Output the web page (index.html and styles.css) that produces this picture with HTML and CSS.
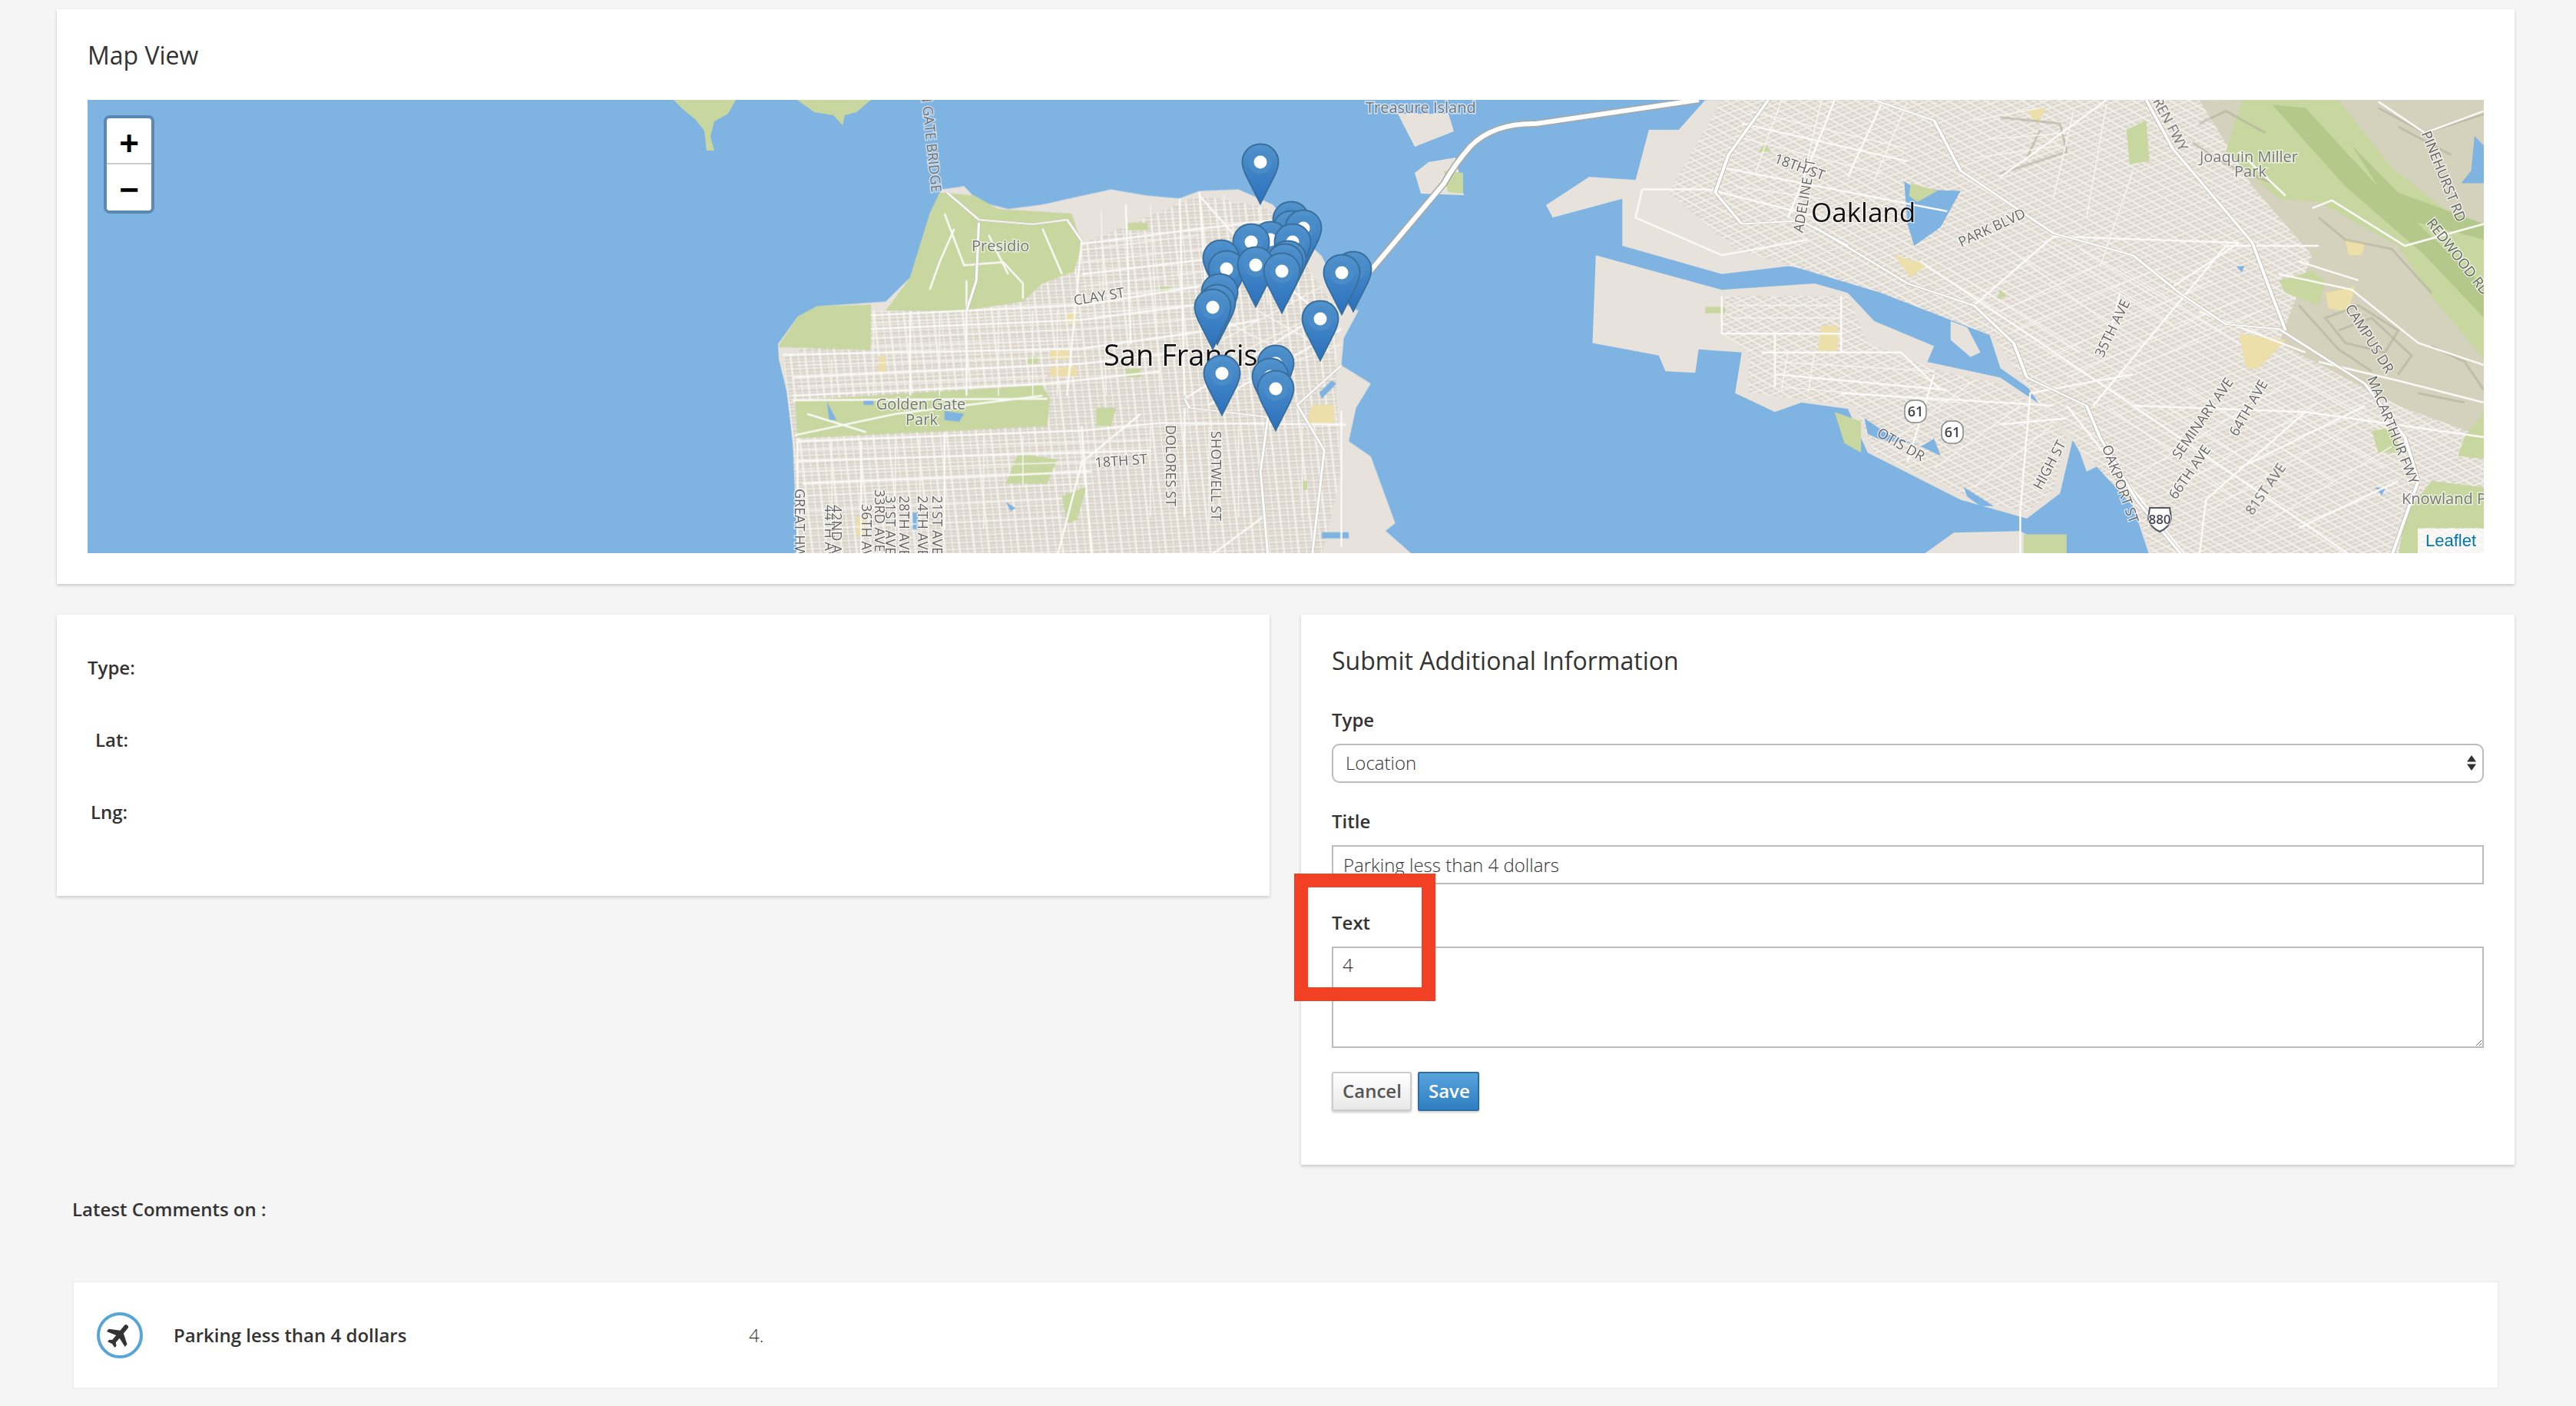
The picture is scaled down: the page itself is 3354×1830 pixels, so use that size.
FILE: index.html
```html
<!DOCTYPE html>
<html lang="en">
<head>
<meta charset="utf-8">
<title>Map View</title>
<link rel="stylesheet" href="styles.css">
</head>
<body>
<main class="page">
  <section class="card map-card">
    <h2 class="card-title">Map View</h2>
    <div class="map">
      <svg class="map-svg" viewBox="114 130 3120 590" width="3120" height="590" xmlns="http://www.w3.org/2000/svg">
        <defs>
          <pattern id="sfgrid" width="30" height="22" patternUnits="userSpaceOnUse" patternTransform="rotate(-4)">
            <rect width="30" height="22" class="p-block"/>
            <path d="M0 0H30M0 11H30M0 0V22M15 0V22" class="p-street"/>
          </pattern>
          <pattern id="oakgrid" width="22" height="22" patternUnits="userSpaceOnUse" patternTransform="rotate(-38)">
            <rect width="22" height="22" class="p-block2"/>
            <path d="M0 0H22M0 11H22M0 0V22M11 0V22" class="p-street2"/>
          </pattern>
          <linearGradient id="pinfill" x1="0" y1="0" x2="0" y2="1">
            <stop offset="0" stop-color="#5193cd"/>
            <stop offset="1" stop-color="#2a70bd"/>
          </linearGradient>
          <symbol id="pin" width="50" height="82" viewBox="0 0 50 82">
            <path d="M25 1.500C11.500 1.500 1.500 12 1.500 25c0 6 2.500 12 5 17.500L25 79l18.500-36.500c2.500-5.500 5-11.500 5-17.500C48.500 12 38.500 1.500 25 1.500z" class="pin-body"/>
            <circle cx="25" cy="25" r="15.500" class="pin-halo"/>
            <circle cx="25" cy="25" r="8.500" class="pin-dot"/>
          </symbol>
          <g id="sfhw">
            <path d="M1020 1530L1005 1250L1020 1070L860 1040L850 1010"/>
            <path d="M1110 1530L1135 1180L1080 1030L1170 900"/>
            <path d="M365 330L430 420L540 435L610 420L640 490"/>
            <path d="M430 430L425 620L405 720"/>
          </g>
          <g id="oakhw">
            <path d="M350 25L290 200L270 320L310 420L400 410L470 490"/>
            <path d="M420 430L560 610L660 680L720 800L740 910L830 1000L850 1100L905 1300L975 1480"/>
            <path d="M510 25L600 90L640 250L780 450L900 520L970 640L1040 740L1120 755L1250 930L1310 1100L1330 1240L1290 1480"/>
            <path d="M920 25L960 180L1080 480L1110 650L1130 760"/>
          </g>
        </defs>

        <g class="tiles">
          <path class="park" d="M877 130L958 130L948 148L930 158L925 178L930 196L920 196L917 170L905 155L890 143Z"/>
          <path class="park" d="M1038 130L1134 130L1115 146L1100 150L1097 163L1085 150L1060 146Z"/>

          <!-- San Francisco, coordinates from the crop -->
          <g transform="translate(1000 120) scale(.638 .395)">
            <path class="land" d="M70 1530L60 1300L40 1000L22 880L20 830L60 740L100 705L150 700L240 690L290 610L330 400L355 320L400 310L430 360L490 385L560 370L630 345L700 320L770 340L840 350L880 325L960 320L1030 370L1090 480L1130 540L1180 700L1205 720L1175 810L1170 900L1230 960L1200 1040L1185 1150L1230 1200L1280 1420L1260 1445L1320 1530Z"/>
            <path class="grid" d="M60 1530L50 1150L30 880L210 720L400 720L640 500L880 340L1020 380L1160 720L1160 1000L1170 1250L1130 1530Z"/>
            <path class="park" d="M350 330L420 340L470 385L620 400L640 500L625 590L560 630L520 690L400 720L240 720L290 610L330 400Z"/>
            <path class="park" d="M20 840L60 740L100 705L210 700L210 850Z"/>
            <path class="park" d="M55 1015L560 965L575 1010L570 1100L60 1140Z"/>
            <path class="park" d="M485 1290L510 1190L590 1210L570 1290Z"/>
            <path class="park" d="M670 1040L710 1040L700 1100L670 1100Z"/>
            <path class="park" d="M600 1330L650 1300L630 1410L610 1420Z"/>
            <path class="park" d="M800 640H820V660H800ZM735 430H775V455H735ZM730 910H760V940H730ZM530 870H550V895H530ZM1090 1280H1100V1310H1090Z"/>
            <path class="sand" d="M225 870H240V920H225ZM575 850H615V880H575ZM575 905H630V935H575ZM1110 1030L1155 1030L1155 1090L1100 1090ZM180 1400H200V1460H180ZM610 730H630V760H610Z"/>
            <path class="lake" d="M195 1015L215 1010L215 1030L195 1030ZM360 1050L400 1060L390 1085L360 1080ZM120 1020L140 1080L125 1080ZM295 1385H305V1440H295ZM485 1350L505 1370L495 1380Z"/>
            <path class="lake" d="M1125 990L1150 950L1160 960L1130 1010Z"/>
            <path class="lake" d="M1130 1450H1185V1470H1130Z"/>

            <g class="rd-thin">
              <path d="M60 900L640 870M60 970L570 935M210 760L640 725M210 810L640 780M210 840L640 815"/>
              <path d="M60 1180L780 1145M60 1250L700 1215M70 1330L660 1290M70 1380L600 1340M70 1440L600 1400"/>
              <path d="M640 520L880 470M640 560L1040 490M640 640L1050 560M640 680L1040 610M640 730L960 690M640 780L920 740"/>
              <path d="M130 880V1000M215 720V1000M350 720V1000M470 720V1000M540 720V1000M590 720V1000"/>
              <path d="M130 1150V1530M260 1130V1530M310 1130V1440M440 1130V1440M520 1130V1300M780 1100V1400M900 1100V1440M960 1100V1400M1090 1100V1400"/>
              <path d="M680 390L690 1000M780 370L800 1000M930 340L960 760M1000 380L1020 700M1050 430L1070 700"/>
              <path d="M900 840L1130 640M950 870L1160 700M970 950L1170 830M940 760L1080 880M1000 720L1150 860"/>
            </g>
            <g class="rd">
              <path d="M30 865L640 845L880 790L1000 750"/>
              <path d="M50 940L640 895L880 850"/>
              <path d="M50 1000L570 960L800 920"/>
              <path d="M60 1150L640 1115L800 1090L1180 1095"/>
              <path d="M60 1215L780 1180"/>
              <path d="M70 1290L660 1250"/>
              <path d="M210 735L650 700L880 640"/>
              <path d="M210 780L640 750L880 700"/>
              <path d="M640 500L880 450L1040 420"/>
              <path d="M640 600L1050 520"/>
              <path d="M290 720V1000"/>
              <path d="M405 620V1000"/>
              <path d="M60 1140V1530"/>
              <path d="M190 1150V1530"/>
              <path d="M360 1120V1440"/>
              <path d="M640 1100L660 1530"/>
              <path d="M730 370L740 830"/>
              <path d="M840 350L850 1000"/>
              <path d="M880 330L900 800"/>
              <path d="M640 490L610 1000"/>
              <path d="M850 1040V1400"/>
              <path d="M1170 1050V1500"/>
              <path d="M850 1010L1130 730"/>
              <path d="M900 1030L1170 780"/>
              <path d="M880 340L1000 560L1120 720"/>
              <path d="M760 1060L640 1220L590 1530"/>
              <path d="M1010 1400L900 1530"/>
              <path d="M50 1015L570 1010"/>
              <path d="M55 1130L260 1060L560 1000"/>
              <path d="M80 1060L200 1120"/>
              <path d="M360 400L400 570L480 560L520 630L520 680"/>
              <path d="M380 450L350 560L330 650M450 470L490 600M560 450L600 600"/>
            </g>
            <use href="#sfhw" class="case"/>
            <use href="#sfhw" class="core"/>
          </g>

          <!-- Treasure Island, Yerba Buena, Bay Bridge -->
          <path class="land" d="M1820 148L1886 148L1893 171L1842 191Z"/>
          <path class="land" d="M1842 225L1860 211L1895 205L1906 254L1850 252Z"/>
          <path class="park" d="M1880 222L1905 225L1905 252L1885 250Z"/>
          <path class="hw-bridge-c" d="M1784 353L1880 239Q1893 215 1915 190Q1945 160 2000 161L2212 130"/>
          <path class="hw-bridge" d="M1784 353L1880 239Q1893 215 1915 190Q1945 160 2000 161L2212 130"/>

          <!-- Oakland and Alameda, coordinates from the crop -->
          <g transform="translate(2000 120) scale(.8635 .408)">
            <path class="land" d="M255 25L215 120L170 120L150 280L80 270L15 360L25 400L130 340L130 490L280 580L380 555L460 580L540 640L620 690L680 750L700 880L780 1000L820 1150L830 1210L870 1170L900 1320L925 1480L1429 1480L1429 25Z"/>
            <path class="grid2" d="M280 25L200 320L300 500L520 640L690 780L760 1000L900 1320L930 1480L1429 1480L1429 900L1200 400L1040 25Z"/>
            <path class="hill" d="M1000 25H1429V1100L1300 1000L1120 800L1170 520L1080 300Z"/>
            <path class="park" d="M1065 25L1210 25L1290 240L1429 470L1429 850L1350 650L1300 490L1180 350L1120 340L1040 190Z"/>
            <path class="park-dark" d="M1110 40L1160 50L1260 280L1380 520L1429 620V720L1340 520L1220 300ZM1230 170L1300 320L1429 420V470L1300 400Z"/>
            <path class="park" d="M1120 600L1170 570L1190 600L1180 680L1130 640Z"/>
            <path class="park" d="M1300 1480L1310 1350L1350 1240L1429 1260L1429 1390L1330 1390L1330 1480Z"/>
            <path class="park" d="M1260 1080L1290 1070L1305 1150L1270 1150Z"/>
            <path class="park" d="M890 120L920 90L925 220L895 230Z"/>
            <path class="park" d="M1400 1100L1429 1020V1170L1390 1160Z"/>
            <path class="park" d="M700 630L710 650L695 660ZM345 165L355 190L335 190ZM560 310L600 320L580 350Z"/>
            <path class="sand" d="M1190 640L1235 620L1225 700L1195 690ZM1220 470L1250 480L1245 520L1225 520ZM1060 770L1130 790L1090 880L1070 880ZM740 60L770 50L755 100ZM540 520L590 550L565 590Z"/>
            <g class="contour">
              <path d="M1190 720L1240 680L1300 760L1280 830L1220 800Z"/>
              <path d="M1210 760L1260 720L1320 840L1300 900"/>
              <path d="M1150 680L1210 820L1260 890"/>
              <path d="M1180 400L1220 470L1290 500L1350 640"/>
              <path d="M1000 100L1040 60L1100 130M990 160L1040 230L1110 290"/>
              <path d="M700 80L790 100L800 190L700 260M760 120L740 210"/>
              <path d="M1350 810L1400 860L1429 950M1330 960L1400 990"/>
              <path d="M1270 50L1340 130L1429 70M1300 110L1380 200"/>
            </g>
            <path class="land" d="M90 520L280 630L420 610L470 640L510 730L600 810L590 860L700 910L770 1010L810 1100L790 1280L740 1360L640 1300L500 1150L470 1010L400 990L360 1020L300 960L310 830L245 820L240 895L195 890L185 840L85 800Z"/>
            <path class="grid2" d="M285 650L470 650L500 800L610 890L700 930L770 1020L800 1100L780 1270L740 1340L660 1300L510 1150L480 1000L320 960L320 830L280 770Z"/>
            <path class="sand" d="M430 745L455 745L455 825L425 825Z"/>
            <path class="park" d="M255 685H285V705H255ZM450 1020L490 1050L490 1150L465 1120Z"/>
            <path class="land" d="M625 730L650 750L670 830L655 845L625 790Z"/>
            <path class="land" d="M580 1480L630 1405L730 1400L800 1480Z"/>
            <path class="park" d="M735 1410H800V1480H735Z"/>
            <path class="lake" d="M555 285L575 310L640 315L610 430L570 490L560 420Z"/>
            <path class="park" d="M565 290L605 315L575 350L562 330Z"/>
            <path class="lake" d="M495 1040L530 1090L580 1130L600 1105L610 1160L570 1120L520 1110L500 1090Z"/>
            <path class="lake" d="M645 1260L690 1320L670 1320L650 1290Z"/>
            <path class="lake" d="M1415 140L1429 170V290L1395 290L1410 250Z"/>
            <path class="lake" d="M1056 555L1068 555L1064 575Z M1265 1260L1280 1265L1275 1285Z"/>
            <g class="rd-thin">
              <path d="M620 560L820 830M700 480L900 800M760 470L960 740M820 500L1010 760M880 560L1060 800"/>
              <path d="M700 700L860 540M720 760L940 560M770 850L1020 600M800 910L1060 660M880 900L1100 690"/>
              <path d="M860 1000L1060 1300M920 960L1140 1270M980 940L1200 1240M1060 930L1280 1200M1140 900L1330 1130"/>
              <path d="M900 1230L1130 930M950 1280L1180 990M1010 1340L1240 1050M1080 1400L1290 1130"/>
              <path d="M660 1260L780 1060M600 1200L730 1000M540 1110L660 920M380 830L370 950M420 830L410 960"/>
              <path d="M300 680H460M300 720H460M360 860L600 890M370 940L640 990"/>
              <path d="M320 60L560 180M300 140L520 260M370 25L330 260M430 25L400 300M560 30L510 280M300 300L430 340"/>
              <path d="M660 90L760 50M680 150L800 130M660 210L790 170"/>
              <path d="M810 60L780 340M860 40L830 400M900 250L850 560"/>
            </g>
            <g class="rd">
              <path d="M580 540L900 1000L1160 1020L1429 1100"/>
              <path d="M660 680L780 460L1060 480"/>
              <path d="M840 1000L1040 490L1180 490"/>
              <path d="M730 1340L745 960L900 900"/>
              <path d="M1000 1480L1010 1300L1160 1020"/>
              <path d="M1150 1390L1300 1240"/>
              <path d="M900 1000L1230 1480"/>
              <path d="M800 1000L980 1480"/>
              <path d="M860 25L760 180L700 270"/>
              <path d="M450 25L380 400M520 40L470 270M310 100L560 220M280 240L620 380"/>
              <path d="M880 640L860 820M960 620L1060 480M1000 700L1160 830M1060 1200L1250 1000"/>
              <path d="M160 310L260 310L430 400M160 310L150 400L280 520L410 470"/>
              <path d="M280 650V770H460M340 830H550L610 950M360 900L620 950M460 960L780 1000"/>
              <path d="M360 770V940M460 650V830M600 900L560 1180M700 1060L800 1040"/>
              <path d="M1170 370L1200 345L1310 490L1429 420"/>
              <path d="M1120 580L1230 630L1330 800L1429 870"/>
              <path d="M1150 540L1240 600M1270 30L1340 130L1429 60"/>
              <path d="M1180 860L1300 920L1429 990"/>
              <path d="M1060 190L1130 330"/>
              <path d="M730 1340V1480"/>
            </g>
            <use href="#oakhw" class="case"/>
            <use href="#oakhw" class="core"/>
          </g>
        </g>

        <!-- labels -->
        <g class="lbl-area">
          <text class="lbl-place" x="1778" y="147">Treasure Island</text>
          <text class="lbl-place" x="1265" y="327">Presidio</text>
          <text class="lbl-place" x="1199" y="533" text-anchor="middle">Golden Gate</text>
          <text class="lbl-place" x="1200" y="553" text-anchor="middle">Park</text>
          <text class="lbl-city" x="1437" y="476">San Francisco</text>
          <text class="lbl-city lbl-oak" x="2358" y="289">Oakland</text>
          <text class="lbl-place" x="2928" y="211" text-anchor="middle">Joaquin Miller</text>
          <text class="lbl-place" x="2930" y="230" text-anchor="middle">Park</text>
          <text class="lbl-place" x="3127" y="656">Knowland Park</text>
          <text class="lbl-st" text-anchor="middle" transform="translate(1432 392) rotate(-9)">CLAY ST</text>
          <text class="lbl-st" text-anchor="middle" transform="translate(1460 606) rotate(-4)">18TH ST</text>
          <text class="lbl-st" text-anchor="end" transform="translate(1213 251) rotate(84)">GOLDEN GATE BRIDGE</text>
          <text class="lbl-st" transform="translate(1518 553) rotate(90)">DOLORES ST</text>
          <text class="lbl-st" transform="translate(1577 561) rotate(90)">SHOTWELL ST</text>
          <text class="lbl-st" transform="translate(1035 636) rotate(90)">GREAT HWY</text>
          <text class="lbl-st" transform="translate(1074 657) rotate(90)">44TH AVE</text>
          <text class="lbl-st" transform="translate(1083 657) rotate(90)">42ND AVE</text>
          <text class="lbl-st" transform="translate(1122 656) rotate(90)">36TH AVE</text>
          <text class="lbl-st" transform="translate(1139 637) rotate(90)">33RD AVE</text>
          <text class="lbl-st" transform="translate(1153 645) rotate(90)">31ST AVE</text>
          <text class="lbl-st" transform="translate(1171 645) rotate(90)">28TH AVE</text>
          <text class="lbl-st" transform="translate(1195 645) rotate(90)">24TH AVE</text>
          <text class="lbl-st" transform="translate(1214 645) rotate(90)">21ST AVE</text>
          <text class="lbl-st" text-anchor="end" transform="translate(2364 208) rotate(-80)">ADELINE ST</text>
          <text class="lbl-st" text-anchor="middle" transform="translate(2341 223) rotate(20)">18TH ST</text>
          <text class="lbl-st" text-anchor="middle" transform="translate(2596 302) rotate(-25)">PARK BLVD</text>
          <text class="lbl-st" text-anchor="end" transform="translate(2838 198) rotate(62)">WARREN FWY</text>
          <text class="lbl-st" text-anchor="middle" transform="translate(3176 232) rotate(68)">PINEHURST RD</text>
          <text class="lbl-st" text-anchor="middle" transform="translate(3196 338) rotate(52)">REDWOOD RD</text>
          <text class="lbl-st" text-anchor="middle" transform="translate(3080 444) rotate(58)">CAMPUS DR</text>
          <text class="lbl-st" text-anchor="middle" transform="translate(3110 562) rotate(68)">MACARTHUR FWY</text>
          <text class="lbl-st" text-anchor="middle" transform="translate(2756 430) rotate(-64)">35TH AVE</text>
          <text class="lbl-st" text-anchor="middle" transform="translate(2873 548) rotate(-55)">SEMINARY AVE</text>
          <text class="lbl-st" text-anchor="middle" transform="translate(2933 534) rotate(-60)">64TH AVE</text>
          <text class="lbl-st" text-anchor="middle" transform="translate(2856 618) rotate(-55)">66TH AVE</text>
          <text class="lbl-st" text-anchor="middle" transform="translate(2955 640) rotate(-55)">81ST AVE</text>
          <text class="lbl-st" text-anchor="middle" transform="translate(2755 632) rotate(70)">OAKPORT ST</text>
          <text class="lbl-st" text-anchor="middle" transform="translate(2674 608) rotate(-62)">HIGH ST</text>
          <text class="lbl-st" text-anchor="middle" transform="translate(2472 584) rotate(30)">OTIS DR</text>
          <rect class="shield" x="2480" y="521" width="28" height="29" rx="11"/>
          <text class="lbl-shield" x="2494" y="542" text-anchor="middle">61</text>
          <rect class="shield" x="2528" y="548" width="28" height="29" rx="11"/>
          <text class="lbl-shield" x="2542" y="569" text-anchor="middle">61</text>
          <path class="shield880" d="M2799 661H2825L2827 675Q2825 686 2812 692Q2799 686 2797 675Z"/>
          <text class="lbl-880" x="2812" y="682" text-anchor="middle">880</text>
        </g>

        <!-- markers, back to front; x = tip - 25, y = tip - 79 -->
        <g>
          <use href="#pin" x="1656" y="261"/>
          <use href="#pin" x="1656" y="273"/>
          <use href="#pin" x="1672" y="272"/>
          <use href="#pin" x="1629" y="287"/>
          <use href="#pin" x="1658" y="290"/>
          <use href="#pin" x="1604" y="290"/>
          <use href="#pin" x="1565" y="311"/>
          <use href="#pin" x="1572" y="325"/>
          <use href="#pin" x="1652" y="312"/>
          <use href="#pin" x="1648" y="316"/>
          <use href="#pin" x="1610" y="320"/>
          <use href="#pin" x="1644" y="328"/>
          <use href="#pin" x="1737" y="326"/>
          <use href="#pin" x="1722" y="330"/>
          <use href="#pin" x="1616" y="186"/>
          <use href="#pin" x="1563" y="355"/>
          <use href="#pin" x="1560" y="369"/>
          <use href="#pin" x="1554" y="375"/>
          <use href="#pin" x="1694" y="390"/>
          <use href="#pin" x="1636" y="448"/>
          <use href="#pin" x="1629" y="465"/>
          <use href="#pin" x="1566" y="461"/>
          <use href="#pin" x="1636" y="481"/>
        </g>
      </svg>
      <div class="zoom-control">
        <button class="zoom-btn zoom-in" type="button">+</button>
        <button class="zoom-btn" type="button">&#8722;</button>
      </div>
      <div class="attribution"><a class="attr-link" href="#">Leaflet</a></div>
    </div>
  </section>

  <div class="columns">
    <section class="card info-card">
      <p class="info-line">Type:</p>
      <p class="info-line info-lat">Lat:</p>
      <p class="info-line info-lng">Lng:</p>
    </section>

    <section class="card form-card">
      <h3 class="form-title">Submit Additional Information</h3>
      <form class="form">
        <div class="field">
          <label class="field-label" for="f-type">Type</label>
          <div class="select-wrap">
            <select class="control select" id="f-type"><option>Location</option></select>
            <svg class="select-arrows" viewBox="0 0 12 20" width="12" height="20" xmlns="http://www.w3.org/2000/svg"><path d="M6 0L12 8.500H0ZM0 11.500H12L6 20Z"/></svg>
          </div>
        </div>
        <div class="field">
          <label class="field-label" for="f-title">Title</label>
          <input class="control input" id="f-title" type="text" value="Parking less than 4 dollars">
        </div>
        <div class="field field-text">
          <label class="field-label" for="f-text">Text</label>
          <textarea class="control textarea" id="f-text">4</textarea>
          <div class="highlight"></div>
        </div>
        <div class="actions">
          <button class="btn btn-cancel" type="button">Cancel</button>
          <button class="btn btn-save" type="button">Save</button>
        </div>
      </form>
    </section>
  </div>

  <section class="comments">
    <h4 class="comments-title">Latest Comments on :</h4>
    <div class="comment">
      <span class="comment-icon">
        <svg class="plane" viewBox="0 0 24 24" width="38" height="38" xmlns="http://www.w3.org/2000/svg"><path transform="rotate(40 12 12)" d="M21 16v-2l-8-5V3.500c0-.83-.67-1.500-1.500-1.500S10 2.670 10 3.500V9l-8 5v2l8-2.500V19l-2 1.500V22l3.500-1 3.500 1v-1.500L13 19v-5.500z"/></svg>
      </span>
      <strong class="comment-title">Parking less than 4 dollars</strong>
      <span class="comment-text">4.</span>
    </div>
  </section>
</main>
</body>
</html>
```

FILE: styles.css
```css
* { box-sizing: border-box; }
html, body { margin: 0; padding: 0; }
body {
  background: #f5f5f5;
  color: #333;
  font-family: "Open Sans", "Noto Sans", sans-serif;
  font-size: 24px;
}
.page { padding: 12px 80px 0 74px; }

.card {
  background: #fff;
  box-shadow: 0 2px 4px rgba(0, 0, 0, .18);
}
.map-card { padding: 41px 40px 40px; height: 748px; }
.card-title {
  margin: 0 0 39px;
  font-size: 32px;
  font-weight: 400;
  line-height: 38px;
  color: #333;
}

/* map */
.map {
  position: relative;
  height: 590px;
  overflow: hidden;
  background: #7fb3e1;
}
.map-svg { display: block; }
.tiles { filter: blur(.6px); }
.land { fill: #e7e3dc; }
.grid { fill: url(#sfgrid); }
.grid2 { fill: url(#oakgrid); }
.p-block { fill: #d9d4ca; }
.p-street { stroke: #f5f3ee; stroke-width: 4; fill: none; }
.p-block2 { fill: #dcd7ce; }
.p-street2 { stroke: #f3f0ea; stroke-width: 4; fill: none; }
.park { fill: #c8d7a0; }
.park-dark { fill: #b4c88c; }
.hill { fill: #d4d2bd; }
.sand { fill: #ecdfa9; }
.lake { fill: #7fb3e1; }
.contour path {
  fill: none;
  stroke: #b3b09e;
  stroke-width: 3;
  opacity: .6;
  vector-effect: non-scaling-stroke;
}
.rd path {
  fill: none;
  stroke: #fbfaf8;
  stroke-width: 2.500;
  vector-effect: non-scaling-stroke;
}
.rd-thin path {
  fill: none;
  stroke: #f7f5f1;
  stroke-width: 1.500;
  vector-effect: non-scaling-stroke;
}
.case, .core {
  fill: none;
  stroke-linejoin: round;
}
.case path, .core path { vector-effect: non-scaling-stroke; }
.case { stroke: #bdb9b0; stroke-width: 7; }
.core { stroke: #fff; stroke-width: 5; }
.hw-bridge-c { fill: none; stroke: #a9a9a4; stroke-width: 9; }
.hw-bridge { fill: none; stroke: #fff; stroke-width: 6; }

.lbl-area text {
  font-family: "Open Sans", "Noto Sans", sans-serif;
  paint-order: stroke;
  stroke: rgba(255, 255, 255, .6);
  stroke-width: 3px;
}
.lbl-city { font-size: 38px; font-weight: 500; fill: #111; }
.lbl-oak { font-size: 35px; }
.lbl-place { font-size: 20px; fill: #777; }
.lbl-st { font-size: 18px; fill: #666; }
.lbl-shield { font-size: 18px; fill: #444; font-weight: 600; }
.lbl-880 { font-size: 17px; fill: #445; font-weight: 600; }
.shield { fill: #fff; stroke: #888; stroke-width: 1.500; }
.shield880 { fill: #fff; stroke: #556; stroke-width: 2; }

.pin-body { fill: url(#pinfill); stroke: #3a6f9c; stroke-width: 2; }
.pin-halo { fill: #4a8cc8; }
.pin-dot { fill: #fff; }

.zoom-control {
  position: absolute;
  top: 20px;
  left: 21px;
  display: flex;
  flex-direction: column;
  width: 66px;
  border: 4px solid rgba(60, 100, 140, .55);
  border-radius: 8px;
  overflow: hidden;
  background-clip: padding-box;
}
.zoom-btn {
  width: 100%;
  height: 60px;
  padding: 6px 0 0;
  border: 0;
  background: #fff;
  color: #000;
  font-family: "Liberation Sans", sans-serif;
  font-size: 44px;
  font-weight: 700;
  line-height: 54px;
}
.zoom-in { border-bottom: 2px solid #ccc; }
.attribution {
  position: absolute;
  right: 0;
  bottom: 0;
  padding: 0 10px;
  height: 32px;
  background: rgba(255, 255, 255, .7);
  font-family: "Liberation Sans", sans-serif;
  font-size: 22px;
  line-height: 32px;
}
.attr-link { color: #0078a8; text-decoration: none; }

/* columns */
.columns {
  display: grid;
  grid-template-columns: 1579px 1580px;
  column-gap: 41px;
  align-items: start;
  margin-top: 40px;
}
.info-card { padding: 51px 40px 0; height: 366px; }
.info-line {
  margin: 0 0 58px;
  font-weight: 600;
  line-height: 36px;
}
.info-lat { margin-left: 10px; }
.info-lng { margin-left: 4px; }

.form-card { padding: 41px 40px 0; height: 716px; }
.form-title {
  margin: 0 0 40px;
  font-size: 32px;
  font-weight: 400;
  line-height: 38px;
}
.field { margin-bottom: 32px; }
.field-label {
  display: block;
  margin-bottom: 13px;
  font-weight: 600;
  line-height: 36px;
}
.control {
  display: block;
  width: 100%;
  border: 2px solid #bbb;
  background: #fff;
  color: #333;
  font-family: "Open Sans", "Noto Sans", sans-serif;
  font-size: 24px;
  font-weight: 300;
}
.select-wrap { position: relative; }
.select {
  height: 51px;
  padding: 0 16px 3px;
  border-radius: 10px;
  appearance: none;
}
.select-arrows {
  position: absolute;
  top: 15px;
  right: 10px;
  fill: #333;
}
.input { height: 51px; padding: 0 13px; }
.textarea { height: 132px; padding: 5px 12px; resize: vertical; }
.field-text { position: relative; margin-bottom: 31px; }
.highlight {
  position: absolute;
  left: -49px;
  top: -46px;
  width: 184px;
  height: 166px;
  border: 18px solid #f14024;
  pointer-events: none;
}
.actions { display: flex; gap: 8px; }
.btn {
  height: 51px;
  padding: 0 12px 3px;
  border-radius: 2px;
  font-family: "Open Sans", "Noto Sans", sans-serif;
  font-size: 24px;
  font-weight: 600;
  box-shadow: 0 2px 3px rgba(0, 0, 0, .2);
}
.btn-cancel {
  width: 104px;
  border: 2px solid #ccc;
  background: linear-gradient(#fff, #e9e9e9);
  color: #555;
}
.btn-save {
  width: 80px;
  border: 2px solid #2e6da4;
  background: linear-gradient(#57a3dd, #2f7fc1);
  color: #fff;
}

/* comments */
.comments { padding: 0 20px; margin-top: 40px; }
.comments-title {
  margin: 0 0 75px;
  font-size: 24px;
  font-weight: 600;
  line-height: 36px;
}
.comment {
  display: flex;
  align-items: center;
  height: 141px;
  padding: 0 30px;
  background: #fff;
  border: 2px solid #efefef;
}
.comment-icon {
  display: flex;
  align-items: center;
  justify-content: center;
  flex: none;
  width: 60px;
  height: 60px;
  border: 4px solid #56a5d8;
  border-radius: 50%;
  fill: #333;
}
.plane { flex: none; stroke: #333; stroke-width: .7; }
.comment-title {
  flex: none;
  width: 749px;
  margin-left: 40px;
  font-weight: 600;
}
.comment-text { font-weight: 300; }
```
